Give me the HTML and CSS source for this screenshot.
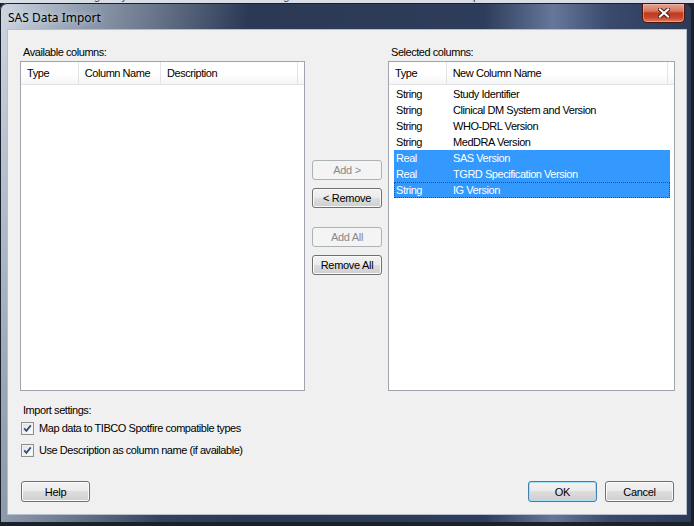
FILE: index.html
```html
<!DOCTYPE html>
<html lang="en">
<head>
    <meta charset="UTF-8">
    <title>SAS Data Import</title>
    <link rel="stylesheet" href="styles.css">
</head>
<body>
    <div class="ribbon">
        <span class="tab">Insert</span>
        <span class="tab">Page Layout</span>
        <span class="tab">References</span>
        <span class="tab">Mailings</span>
        <span class="tab">Review</span>
        <span class="tab">View</span>
        <span class="tab">Developer</span>
    </div>

    <div class="window">
        <div class="titlebar">
            <span class="title">SAS Data Import</span>
            <button class="close" title="Close">
                <svg width="12" height="10" viewBox="0 0 12 10">
                    <path d="M2 1.5 L10 8.5 M10 1.5 L2 8.5" stroke="#3b1a14" stroke-width="4" stroke-linecap="square"/>
                    <path d="M2 1.5 L10 8.5 M10 1.5 L2 8.5" stroke="#ffffff" stroke-width="2.2" stroke-linecap="square"/>
                </svg>
            </button>
        </div>

        <div class="client">
            <div class="columns">
                <div class="panel panel-left">
                    <div class="caption">Available columns:</div>
                    <div class="listview">
                        <div class="lv-header">
                            <span class="hd hd-type">Type</span>
                            <span class="hd hd-colname">Column Name</span>
                            <span class="hd hd-desc">Description</span>
                            <span class="hd hd-rest"></span>
                        </div>
                    </div>
                </div>

                <div class="movers">
                    <button class="btn" disabled>Add &gt;</button>
                    <button class="btn btn-remove">&lt; Remove</button>
                    <button class="btn btn-addall" disabled>Add All</button>
                    <button class="btn btn-remove">Remove All</button>
                </div>

                <div class="panel panel-right">
                    <div class="caption">Selected columns:</div>
                    <div class="listview">
                        <div class="lv-header">
                            <span class="hd hd-type">Type</span>
                            <span class="hd hd-newname">New Column Name</span>
                            <span class="hd hd-rest"></span>
                        </div>
                        <div class="lv-rows">
                            <div class="row"><span class="c-type">String</span><span class="c-name">Study Identifier</span></div>
                            <div class="row"><span class="c-type">String</span><span class="c-name">Clinical DM System and Version</span></div>
                            <div class="row"><span class="c-type">String</span><span class="c-name">WHO-DRL Version</span></div>
                            <div class="row"><span class="c-type">String</span><span class="c-name">MedDRA Version</span></div>
                            <div class="row selected"><span class="c-type">Real</span><span class="c-name">SAS Version</span></div>
                            <div class="row selected"><span class="c-type">Real</span><span class="c-name">TGRD Specification Version</span></div>
                            <div class="row selected focused"><span class="c-type">String</span><span class="c-name">IG Version</span></div>
                        </div>
                    </div>
                </div>
            </div>

            <div class="settings">
                <div class="caption">Import settings:</div>
                <label class="check-row">
                    <span class="checkbox">
                        <svg width="11" height="11" viewBox="0 0 11 11"><path d="M2.2 5.4 L4.4 7.9 L8.8 2.4" fill="none" stroke="#344a7a" stroke-width="1.7"/></svg>
                    </span>
                    Map data to TIBCO Spotfire compatible types
                </label>
                <label class="check-row">
                    <span class="checkbox">
                        <svg width="11" height="11" viewBox="0 0 11 11"><path d="M2.2 5.4 L4.4 7.9 L8.8 2.4" fill="none" stroke="#344a7a" stroke-width="1.7"/></svg>
                    </span>
                    Use Description as column name (if available)
                </label>
            </div>

            <div class="footer">
                <button class="btn">Help</button>
                <div class="footer-right">
                    <button class="btn btn-default">OK</button>
                    <button class="btn">Cancel</button>
                </div>
            </div>
        </div>
    </div>
</body>
</html>
```

FILE: styles.css
```css
body {
    margin: 0;
    width: 694px;
    height: 526px;
    overflow: hidden;
    background: #1c2029;
    font-family: "Liberation Sans", Arial, sans-serif;
    font-size: 11px;
    letter-spacing: -0.45px;
    color: #000;
}

/* word ribbon peeking above the dialog */
.ribbon {
    height: 3px;
    overflow: hidden;
    background: #d9dee6;
    display: flex;
    gap: 28px;
    padding-left: 25px;
}
.ribbon .tab {
    margin-top: -10px;
    line-height: 13px;
    color: #3a3f48;
    letter-spacing: 0;
}

.window {
    width: 692px;
    height: 520px;
    box-sizing: border-box;
    padding: 0 6px 9px 8px;
    border-radius: 7px 7px 0 0;
    display: flex;
    flex-direction: column;
    background:
        linear-gradient(100deg, rgba(214,222,232,.95) 0%, rgba(170,182,198,.8) 10%, rgba(60,76,104,0) 32%),
        linear-gradient(90deg, #445369 0%, #2b3955 35%, #2e3d5b 70%, #66779a 80%, #3a4a6c 88%, #2c3a58 100%);
    box-shadow: inset 0 0 0 1px #1a202b;
}

.titlebar {
    height: 27px;
    display: flex;
    justify-content: space-between;
    align-items: flex-start;
}
.title {
    font-family: "Noto Sans", "Open Sans", sans-serif;
    font-size: 12px;
    letter-spacing: 0;
    line-height: 14px;
    margin-top: 8px;
    text-shadow: 0 0 6px rgba(255,255,255,.7);
}
.close {
    width: 43px;
    height: 19px;
    margin-top: 1px;
    margin-right: 1px;
    padding: 0;
    border: 1px solid #4a1810;
    border-top: none;
    border-radius: 0 0 5px 5px;
    background: linear-gradient(#e6a594 0%, #d8765e 40%, #c2381c 50%, #c9462a 75%, #df7e62 100%);
    box-shadow: inset 0 0 0 1px rgba(255,200,180,.45);
    display: flex;
    align-items: center;
    justify-content: center;
}

.client {
    flex: 1;
    background: #f0f0f0;
    box-shadow: 0 0 0 1px #b6c0cd;
    padding: 16px 11px 12px 12px;
    display: flex;
    flex-direction: column;
}

.columns {
    display: flex;
}
.panel-left { width: 285px; }
.panel-right { width: 287px; }

.caption {
    line-height: 13px;
    padding-left: 3px;
    margin-bottom: 2px;
}

.listview {
    height: 330px;
    box-sizing: border-box;
    border: 1px solid #a0a5ad;
    background: #fff;
}
.lv-header {
    display: flex;
    height: 23px;
    box-sizing: border-box;
    border-bottom: 1px solid #e5e5e5;
    background: linear-gradient(#ffffff 0%, #ffffff 55%, #f4f5f7 100%);
}
.hd {
    line-height: 22px;
    padding-left: 6px;
    box-sizing: border-box;
    border-right: 1px solid #e3e4e6;
    white-space: nowrap;
}
.hd-type { width: 58px; }
.panel-left .hd-type { width: 59px; }
.hd-colname { width: 84px; }
.hd-desc { width: 140px; }
.hd-newname { width: 223px; }
.hd-rest { flex: 1; border-right: none; }

.lv-rows {
    padding: 1px 0 0 5px;
}
.row {
    display: flex;
    height: 16px;
    line-height: 16px;
    width: 276px;
    white-space: nowrap;
}
.c-type {
    width: 53px;
    padding-left: 2px;
    box-sizing: border-box;
}
.c-name {
    padding-left: 6px;
}
.row.selected {
    background: #3399ff;
    color: #fff;
}
.row.focused {
    outline: 1px dotted #1d4f8a;
    outline-offset: -1px;
}

.movers {
    width: 70px;
    margin: 0 6px 0 7px;
    padding-top: 114px;
    display: flex;
    flex-direction: column;
}
.btn-remove { margin-top: 8px; }
.btn-addall { margin-top: 19px; }

.btn {
    width: 70px;
    height: 20px;
    padding: 0;
    border: 1px solid #707070;
    border-radius: 3px;
    background: linear-gradient(#f2f2f2 0%, #ebebeb 50%, #dddddd 50%, #cfcfcf 100%);
    box-shadow: inset 0 0 0 1px #fafafa;
    font-family: inherit;
    font-size: 11px;
    letter-spacing: -0.3px;
    color: #000;
}
.btn:disabled {
    border-color: #adb2b5;
    background: #f4f4f4;
    box-shadow: none;
    color: #8a8a8a;
}
.btn-default {
    border-color: #3c7fb1;
    box-shadow: inset 0 0 0 1px #a6e0f8;
}

.settings {
    margin-top: 13px;
}
.settings .caption {
    margin-bottom: 0;
}
.check-row {
    display: flex;
    align-items: center;
    height: 22px;
    margin-left: 1px;
}
.checkbox {
    width: 13px;
    height: 13px;
    box-sizing: border-box;
    margin-right: 5px;
    border: 1px solid #8e8f8f;
    background: linear-gradient(135deg, #dcdcdc 0%, #f4f4f4 60%, #ffffff 100%);
    box-shadow: inset 0 0 0 1px #f2f2f2;
    display: flex;
    align-items: center;
    justify-content: center;
}

.footer {
    margin-top: auto;
    display: flex;
    justify-content: space-between;
    padding: 0 1px;
}
.footer .btn {
    width: 69px;
    height: 21px;
}
.footer-right {
    display: flex;
    gap: 8px;
}
```
